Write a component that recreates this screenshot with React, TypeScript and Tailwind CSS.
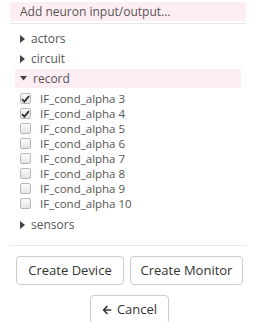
import React from "react";
import { FaArrowLeft } from "react-icons/fa";

const font = { fontFamily: '"Open Sans", "DejaVu Sans", sans-serif' };

function CaretRight() {
  return (
    <svg width="5" height="8" viewBox="0 0 5 8" className="shrink-0">
      <path d="M0 0 L5 4 L0 8 Z" fill="#444" />
    </svg>
  );
}
function CaretDown() {
  return (
    <svg width="7" height="5" viewBox="0 0 7 5" className="shrink-0">
      <path d="M0 0 L7 0 L3.5 4.5 Z" fill="#444" />
    </svg>
  );
}

function Check({ checked }: { checked: boolean }) {
  return (
    <div className="w-[11px] h-[11px] rounded-[2px] border border-[#b8b8b8] bg-gradient-to-b from-[#fbfbfb] to-[#e4e4e4] flex items-center justify-center shrink-0">
      {checked && (
        <svg width="9" height="8" viewBox="0 0 9 8">
          <path d="M1 4.2 L3.4 6.6 L8 1.2" stroke="#333" strokeWidth="1.8" fill="none" />
        </svg>
      )}
    </div>
  );
}

export default function App() {
  const items = [3, 4, 5, 6, 7, 8, 9, 10];
  return (
    <div className="w-[256px] h-[322px] overflow-hidden bg-white text-[#555] text-[12px]" style={font}>
      <div className="pt-[2px] px-[10px]">
        <div className="h-[19px] bg-[#fdeef3] pl-[10px] flex items-center text-[#555]">
          Add neuron input/output...
        </div>
        <div className="mt-[2px] border-t border-[#e8e8e8]" />
      </div>
      <div className="mx-[15px] mt-[5px]">
        <div className="h-[20px] flex items-center pl-[5px] gap-[6px]">
          <CaretRight />
          <span>actors</span>
        </div>
        <div className="h-[20px] flex items-center pl-[5px] gap-[6px]">
          <CaretRight />
          <span>circuit</span>
        </div>
        <div className="h-[19px] flex items-center pl-[5px] gap-[6px] bg-[#fdeef3]">
          <CaretDown />
          <span>record</span>
        </div>
        <div className="mt-[3px]">
          {items.map((n) => (
            <div key={n} className="h-[15px] flex items-center pl-[5px] gap-[9px]">
              <Check checked={n === 3 || n === 4} />
              <span className="text-[11.5px]">IF_cond_alpha {n}</span>
            </div>
          ))}
        </div>
        <div className="mt-[4px] h-[20px] flex items-center pl-[5px] gap-[6px]">
          <CaretRight />
          <span>sensors</span>
        </div>
      </div>
      <div className="mx-[10px] mt-[10px] border-t border-[#e8e8e8]" />
      <div className="flex justify-center gap-[6px] mt-[10px] pl-[3px]">
        <button className="w-[108px] h-[29px] border border-[#ccc] rounded-[4px] text-[13px] text-[#333] bg-white">
          Create Device
        </button>
        <button className="w-[113px] h-[29px] border border-[#ccc] rounded-[4px] text-[13px] text-[#333] bg-white">
          Create Monitor
        </button>
      </div>
      <div className="flex justify-center mt-[10px] pl-[3px]">
        <button className="w-[79px] h-[30px] border border-[#ccc] rounded-[4px] text-[13px] text-[#333] bg-white flex items-center justify-center gap-[5px]">
          <FaArrowLeft className="w-[10px] h-[10px]" />
          <span>Cancel</span>
        </button>
      </div>
    </div>
  );
}
